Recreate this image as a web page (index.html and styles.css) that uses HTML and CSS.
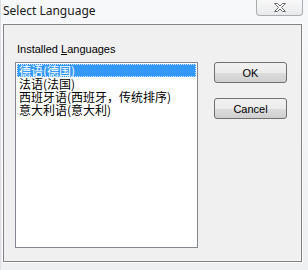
FILE: index.html
```html
<!DOCTYPE html>
<html lang="en">
<head>
  <meta charset="UTF-8" />
  <title>Select Language</title>
  <link rel="stylesheet" href="styles.css">
</head>
<body>
  <div class="window">
    <div class="titlebar">
      <span class="title">Select Language</span>
      <button class="close-btn" aria-label="Close">
        <svg width="14" height="11" viewBox="0 0 14 11">
          <path d="M1.5 1.5 H4.5 L7 4 L9.5 1.5 H12.5 L8.5 5.5 L12.5 9.5 H9.5 L7 7 L4.5 9.5 H1.5 L5.5 5.5 Z" fill="#fff" stroke="#6b6b6b" stroke-width="1" stroke-linejoin="round"/>
        </svg>
      </button>
    </div>

    <div class="client">
      <div class="dialog">
        <label class="group-label" for="langList">Installed <u>L</u>anguages</label>
        <ul class="listbox" id="langList">
          <li class="selected">德语(德国)</li>
          <li>法语(法国)</li>
          <li>西班牙语(西班牙，传统排序)</li>
          <li>意大利语(意大利)</li>
        </ul>
        <div class="buttons">
          <button class="btn">OK</button>
          <button class="btn">Cancel</button>
        </div>
      </div>
    </div>
  </div>
</body>
</html>
```

FILE: styles.css
```css
body {
  margin: 0;
  background: #f3f4f6;
  font-family: 'Liberation Sans', Arial, sans-serif;
}

.window {
  width: 308px;
  height: 270px;
  box-sizing: border-box;
  background: linear-gradient(180deg, #f7f8fa 0%, #eef0f2 100%);
  border-left: 1px solid #dcdfe3;
}

.titlebar {
  display: flex;
  align-items: flex-start;
  height: 24px;
}

.title {
  font-family: 'Noto Sans', sans-serif;
  font-size: 12px;
  line-height: 16px;
  color: #1a1a1a;
  padding: 3px 0 0 2px;
}

.close-btn {
  margin-left: auto;
  margin-right: 5px;
  width: 47px;
  height: 16px;
  padding: 0;
  border: 1px solid #a9acb1;
  border-top: none;
  border-radius: 0 0 4px 4px;
  background: linear-gradient(180deg, #f8f8f8 0%, #e9eaec 100%);
  display: flex;
  align-items: center;
  justify-content: center;
}

.client {
  margin-left: 2px;
  width: 299px;
  height: 238px;
  box-sizing: border-box;
  background: #f0f0f0;
  border: 1px solid #838383;
  box-shadow: 0 0 0 1px #fbfbfb;
}

.dialog {
  display: grid;
  grid-template-columns: 183px 73px;
  column-gap: 16px;
  row-gap: 6px;
  padding: 18px 0 0 11px;
}

.group-label {
  grid-column: 1 / 3;
  font-size: 11px;
  line-height: 13px;
  color: #000;
  padding-left: 2px;
}

.group-label u {
  text-decoration-thickness: 1px;
  text-underline-offset: 1px;
}

.listbox {
  margin: 0;
  padding: 1px;
  list-style: none;
  height: 186px;
  box-sizing: border-box;
  background: #fff;
  border: 1px solid #828790;
  font-family: 'Noto Sans CJK SC', sans-serif;
  font-size: 12px;
}

.listbox li {
  height: 13px;
  line-height: 13px;
  padding-left: 2px;
  white-space: nowrap;
  color: #000;
}

.listbox li.selected {
  background: #3399ff;
  color: #fff;
  outline: 1px dotted #cfe4ff;
  outline-offset: -1px;
}

.buttons {
  display: flex;
  flex-direction: column;
  gap: 15px;
}

.btn {
  height: 21px;
  padding: 0;
  border: 1px solid #707070;
  border-radius: 3px;
  background: linear-gradient(180deg, #f2f2f2 0%, #ebebeb 50%, #dddddd 51%, #cfcfcf 100%);
  font-family: 'Liberation Sans', Arial, sans-serif;
  font-size: 11px;
  color: #000;
}
```
